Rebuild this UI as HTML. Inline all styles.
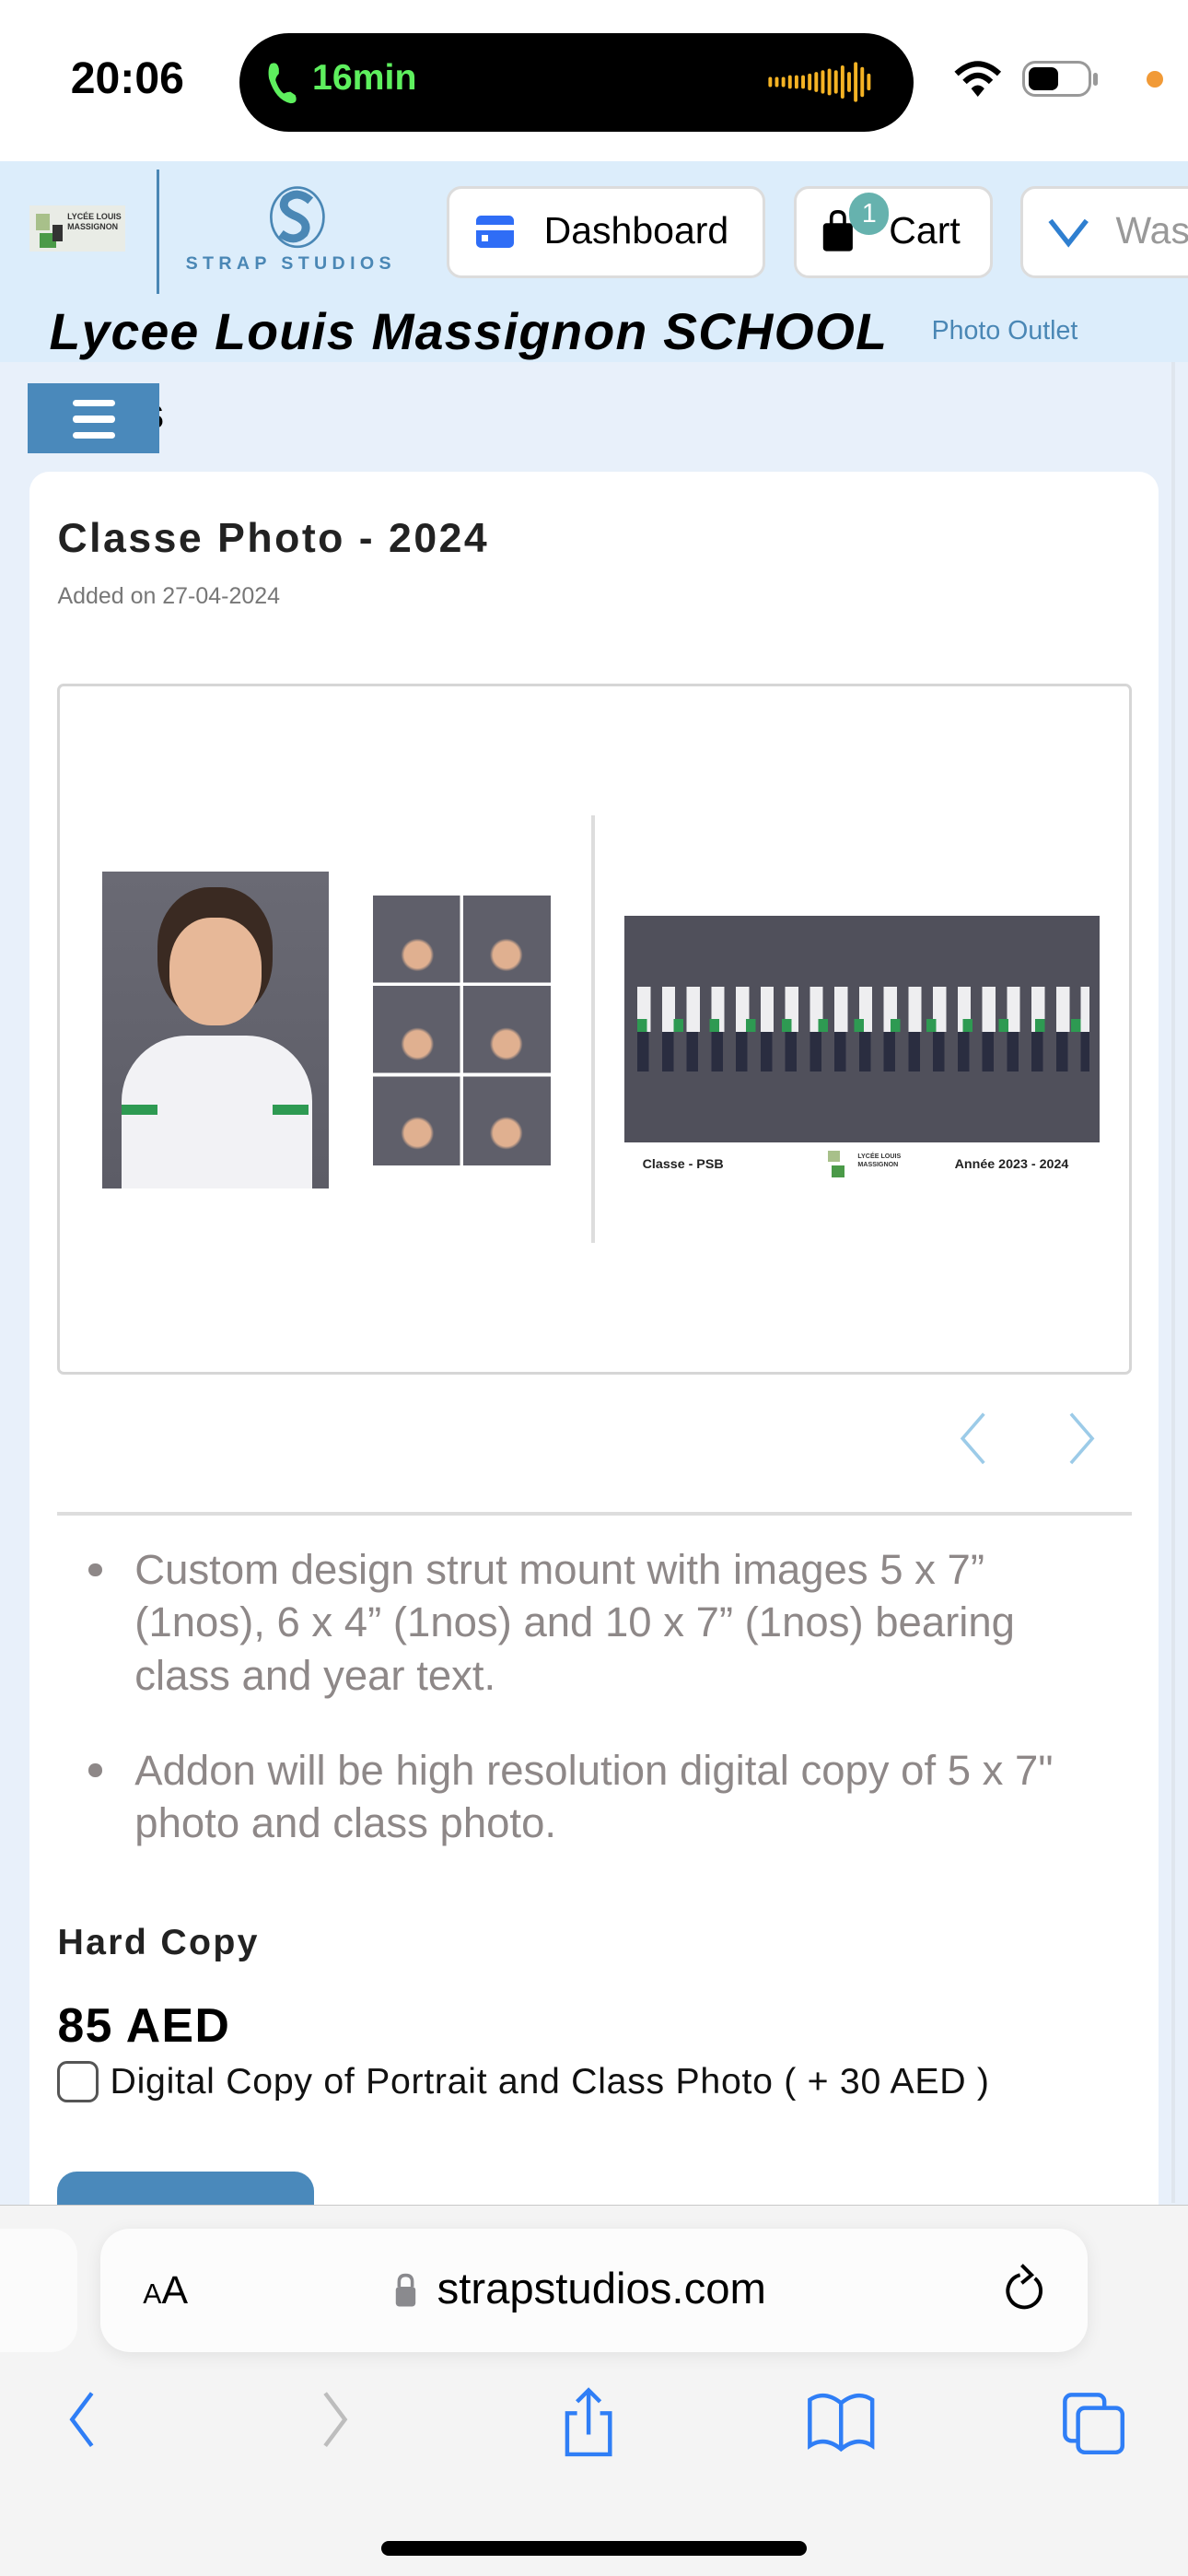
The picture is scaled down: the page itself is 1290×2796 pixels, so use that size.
<!DOCTYPE html>
<html><head><meta charset="utf-8">
<style>
html,body{margin:0;padding:0;}
body{width:1290px;height:2796px;overflow:hidden;background:#e8f0fa;font-family:"Liberation Sans",sans-serif;}
#w{zoom:1.78423;width:723px;height:1567px;position:relative;overflow:hidden;background:#e8f0fa;}
.a{position:absolute;}
.btn{position:absolute;background:#fff;border:2px solid #dcdcdc;border-radius:9px;box-sizing:border-box;}
</style></head><body><div id="w">
<div class="a" style="left:0;top:0;width:723px;height:98px;background:#fff"></div>
<div class="a" style="left:43px;top:32px;font-size:27px;font-weight:bold;color:#000">20:06</div>
<div class="a" style="left:146px;top:20px;width:410px;height:60px;background:#000;border-radius:30px"></div>
<svg class="a" style="left:160px;top:36px" width="24" height="28" viewBox="0 0 24 28"><path d="M5 3 Q9 1 10 6 L10 9 Q8 11 8 13 Q10 19 13 21 Q15 20 17 20 L20 22 Q22 27 17 27 Q8 25 4 12 Q3 6 5 3Z" fill="#5ef05e"/></svg>
<div class="a" style="left:190px;top:35px;font-size:22px;color:#5ef05e;font-weight:bold">16min</div>
<svg class="a" style="left:466px;top:36px" width="68" height="28"><g stroke="#f5b324" stroke-width="2.2" stroke-linecap="round">
<line x1="3" y1="12" x2="3" y2="16"/><line x1="7" y1="12" x2="7" y2="16"/><line x1="11" y1="12" x2="11" y2="16"/><line x1="15" y1="11" x2="15" y2="17"/><line x1="19" y1="11" x2="19" y2="17"/><line x1="23" y1="11" x2="23" y2="17"/><line x1="27" y1="10" x2="27" y2="18"/><line x1="31" y1="9" x2="31" y2="19"/><line x1="35" y1="8" x2="35" y2="20"/><line x1="39" y1="7" x2="39" y2="21"/><line x1="43" y1="8" x2="43" y2="20"/><line x1="47" y1="5" x2="47" y2="23"/><line x1="51" y1="9" x2="51" y2="19"/><line x1="55" y1="3" x2="55" y2="25"/><line x1="59" y1="6" x2="59" y2="22"/><line x1="63" y1="10" x2="63" y2="18"/></g></svg>
<svg class="a" style="left:580px;top:36px" width="30" height="24" viewBox="0 0 30 24"><path d="M2 9 Q15 -3 28 9" stroke="#000" stroke-width="3.5" fill="none"/><path d="M7 14 Q15 6 23 14" stroke="#000" stroke-width="3.5" fill="none"/><path d="M11 18 L15 23 L19 18 Q15 14 11 18Z" fill="#000"/></svg>
<div class="a" style="left:622px;top:37px;width:42px;height:22px;border:2px solid #999;border-radius:8px;box-sizing:border-box"></div>
<div class="a" style="left:626px;top:41px;width:18px;height:14px;background:#000;border-radius:4px"></div>
<div class="a" style="left:665px;top:44px;width:3px;height:8px;background:#999;border-radius:2px"></div>
<div class="a" style="left:698px;top:43px;width:10px;height:10px;background:#f19a37;border-radius:50%"></div>
<div class="a" style="left:0;top:98px;width:723px;height:122px;background:#dcedfb"></div>
<div class="a" style="left:18px;top:125px;width:58px;height:28px;background:#e9ece6"></div>
<div class="a" style="left:22px;top:130px;width:8px;height:10px;background:#a8c08a"></div>
<div class="a" style="left:24px;top:142px;width:10px;height:9px;background:#4a9a48"></div>
<div class="a" style="left:32px;top:137px;width:6px;height:10px;background:#333"></div>
<div class="a" style="left:41px;top:129px;font-size:5px;line-height:6px;color:#333;font-weight:bold">LYCÉE LOUIS<br>MASSIGNON</div>
<div class="a" style="left:95px;top:103px;width:2px;height:76px;background:#4a87b5"></div>
<svg class="a" style="left:162px;top:112px" width="38" height="40" viewBox="0 0 38 40"><ellipse cx="19" cy="20" rx="16" ry="18" fill="none" stroke="#4a87b5" stroke-width="1.5"/><path d="M27 10 Q19 3 12 9 Q8 15 17 19 Q27 23 23 30 Q17 36 9 30" fill="none" stroke="#4a87b5" stroke-width="5"/></svg>
<div class="a" style="left:113px;top:154px;font-size:11px;letter-spacing:3px;color:#4a87b5;font-weight:bold">STRAP STUDIOS</div>
<div class="btn" style="left:272px;top:113px;width:194px;height:56px"></div>
<div class="a" style="left:290px;top:131px;width:23px;height:20px;background:#2f6df6;border-radius:3px"></div>
<div class="a" style="left:290px;top:137px;width:23px;height:3px;background:#fff"></div>
<div class="a" style="left:293px;top:143px;width:4px;height:4px;background:#fff"></div>
<div class="a" style="left:331px;top:127px;font-size:23px;color:#000">Dashboard</div>
<div class="btn" style="left:483px;top:113px;width:121px;height:56px"></div>
<svg class="a" style="left:500px;top:128px" width="20" height="26"><path d="M6 9 V5 Q6 1 10 1 Q14 1 14 5 V9" stroke="#000" stroke-width="2" fill="none"/><rect x="1" y="8" width="18" height="17" rx="2" fill="#000"/></svg>
<div class="a" style="left:517px;top:117px;width:24px;height:26px;background:#66b2ae;border-radius:12px;color:#fff;font-size:16px;text-align:center;line-height:26px">1</div>
<div class="a" style="left:541px;top:127px;font-size:23px;color:#000">Cart</div>
<div class="btn" style="left:621px;top:113px;width:120px;height:56px"></div>
<svg class="a" style="left:637px;top:131px" width="26" height="20"><path d="M2 3 L13 17 L24 3" stroke="#2f7fd0" stroke-width="3" fill="none"/></svg>
<div class="a" style="left:679px;top:127px;font-size:23px;color:#999">Was</div>
<div class="a" style="left:30px;top:184px;font-size:31px;font-weight:bold;font-style:italic;color:#000;letter-spacing:0.7px">Lycee Louis Massignon SCHOOL</div>
<div class="a" style="left:567px;top:192px;font-size:16px;color:#4a87b5">Photo Outlet</div>
<div class="a" style="left:713px;top:220px;width:2px;height:1120px;background:#dfe6ee"></div>
<div class="a" style="left:85px;top:236px;font-size:27px;font-weight:bold">s</div>
<div class="a" style="left:17px;top:233px;width:80px;height:43px;background:#4a89bb"></div>
<div class="a" style="left:44px;top:243px;width:26px;height:4px;background:#fff;border-radius:2px"></div>
<div class="a" style="left:44px;top:253px;width:26px;height:4px;background:#fff;border-radius:2px"></div>
<div class="a" style="left:44px;top:263px;width:26px;height:4px;background:#fff;border-radius:2px"></div>
<div class="a" style="left:18px;top:287px;width:687px;height:1100px;background:#fff;border-radius:12px"></div>
<div class="a" style="left:35px;top:314px;font-size:25px;font-weight:bold;color:#222;letter-spacing:1.4px">Classe Photo - 2024</div>
<div class="a" style="left:35px;top:355px;font-size:14px;color:#777">Added on 27-04-2024</div>
<div class="a" style="left:35px;top:416px;width:654px;height:420px;border:2px solid #d6d6d6;border-radius:4px;box-sizing:border-box"></div>
<div class="a" style="left:62px;top:530px;width:138px;height:193px;background:linear-gradient(#6a6a74,#5c5c66)"></div>
<div class="a" style="left:96px;top:540px;width:70px;height:80px;background:#3a2a22;border-radius:45%"></div>
<div class="a" style="left:103px;top:558px;width:56px;height:66px;background:#e7b898;border-radius:45%"></div>
<div class="a" style="left:74px;top:630px;width:116px;height:93px;background:#f2f2f5;border-radius:40px 40px 0 0"></div>
<div class="a" style="left:74px;top:672px;width:22px;height:6px;background:#2e9a52"></div>
<div class="a" style="left:166px;top:672px;width:22px;height:6px;background:#2e9a52"></div>
<div class="a" style="left:227px;top:545px;width:108px;height:164px;background:
linear-gradient(90deg,transparent 53px,#fff 53px,#fff 55px,transparent 55px),
linear-gradient(transparent 53px,#fff 53px,#fff 55px,transparent 55px,transparent 108px,#fff 108px,#fff 110px,transparent 110px),
radial-gradient(circle at 25% 22%,#e0b090 8px,transparent 10px),radial-gradient(circle at 75% 22%,#e0b090 8px,transparent 10px),
radial-gradient(circle at 25% 55%,#e0b090 8px,transparent 10px),radial-gradient(circle at 75% 55%,#e0b090 8px,transparent 10px),
radial-gradient(circle at 25% 88%,#e0b090 8px,transparent 10px),radial-gradient(circle at 75% 88%,#e0b090 8px,transparent 10px),#5f5f6a"></div>
<div class="a" style="left:360px;top:496px;width:2px;height:260px;background:#ddd"></div>
<div class="a" style="left:380px;top:557px;width:289px;height:138px;background:#50505b"></div>
<div class="a" style="left:388px;top:600px;width:275px;height:52px;background:repeating-linear-gradient(90deg,#eeeef0 0 8px,#50505b 8px 15px)"></div>
<div class="a" style="left:388px;top:620px;width:275px;height:8px;background:repeating-linear-gradient(90deg,#2e9a52 0 6px,transparent 6px 22px)"></div>
<div class="a" style="left:388px;top:628px;width:275px;height:24px;background:repeating-linear-gradient(90deg,#2a2d40 0 7px,#50505b 7px 15px)"></div>
<div class="a" style="left:391px;top:704px;font-size:8px;font-weight:bold;color:#222">Classe - PSB</div>
<div class="a" style="left:504px;top:700px;width:7px;height:7px;background:#a8c08a"></div>
<div class="a" style="left:506px;top:709px;width:8px;height:7px;background:#4a9a48"></div>
<div class="a" style="left:522px;top:701px;font-size:4px;line-height:5px;font-weight:bold;color:#333">LYCÉE LOUIS<br>MASSIGNON</div>
<div class="a" style="left:581px;top:704px;font-size:8px;font-weight:bold;color:#222">Année 2023 - 2024</div>
<svg class="a" style="left:582px;top:858px" width="86" height="34"><path d="M17 2 L4 17 L17 32" stroke="#9ccbe8" stroke-width="2" fill="none"/><path d="M70 2 L83 17 L70 32" stroke="#9ccbe8" stroke-width="2" fill="none"/></svg>
<div class="a" style="left:35px;top:920px;width:654px;height:2px;background:#ddd"></div>
<div class="a" style="left:82px;top:939px;width:590px;font-size:25.5px;line-height:32px;color:#8e8888">Custom design strut mount with images 5 x 7” (1nos), 6 x 4” (1nos) and 10 x 7” (1nos) bearing class and year text.</div>
<div class="a" style="left:82px;top:1061px;width:620px;font-size:25.5px;line-height:32px;color:#8e8888">Addon will be high resolution digital copy of 5 x 7" photo and class photo.</div>
<div class="a" style="left:54px;top:951px;width:8px;height:8px;background:#8e8888;border-radius:50%"></div>
<div class="a" style="left:54px;top:1073px;width:8px;height:8px;background:#8e8888;border-radius:50%"></div>
<div class="a" style="left:35px;top:1169px;font-size:22px;font-weight:bold;color:#222;letter-spacing:1.3px">Hard Copy</div>
<div class="a" style="left:35px;top:1215px;font-size:29px;font-weight:bold;color:#000;letter-spacing:0.8px">85 AED</div>
<div class="a" style="left:35px;top:1254px;width:25px;height:25px;border:2px solid #555;border-radius:6px;box-sizing:border-box"></div>
<div class="a" style="left:67px;top:1254px;font-size:22px;color:#111;letter-spacing:0.4px">Digital Copy of Portrait and Class Photo ( + 30 AED )</div>
<div class="a" style="left:35px;top:1321px;width:156px;height:50px;background:#4a89bb;border-radius:12px"></div>
<div class="a" style="left:0;top:1341px;width:723px;height:226px;background:#f4f4f4;border-top:1px solid #c8c8c8"></div>
<div class="a" style="left:-20px;top:1356px;width:67px;height:75px;background:#fbfbfb;border-radius:16px"></div>
<div class="a" style="left:61px;top:1356px;width:601px;height:75px;background:#fcfcfc;border-radius:18px;box-shadow:0 2px 10px rgba(0,0,0,0.08)"></div>
<div class="a" style="left:87px;top:1380px;color:#000"><span style="font-size:17px">A</span><span style="font-size:24px">A</span></div>
<svg class="a" style="left:240px;top:1382px" width="14" height="22"><path d="M3 9 V6 Q3 2 7 2 Q11 2 11 6 V9" stroke="#8a8a8e" stroke-width="2" fill="none"/><rect x="1" y="9" width="12" height="12" rx="2" fill="#8a8a8e"/></svg>
<div class="a" style="left:266px;top:1377px;font-size:26.5px;color:#000">strapstudios.com</div>
<svg class="a" style="left:610px;top:1376px" width="30" height="34"><path d="M20 10 A10 10 0 1 1 11 8" stroke="#000" stroke-width="2.2" fill="none"/><path d="M12 2 L18 8 L12 13" stroke="#000" stroke-width="2.2" fill="none"/></svg>
<svg class="a" style="left:36px;top:1454px" width="24" height="36"><path d="M20 2 L8 18 L20 34" stroke="#2f7ef6" stroke-width="2.5" fill="none"/></svg>
<svg class="a" style="left:194px;top:1454px" width="24" height="36"><path d="M4 2 L16 18 L4 34" stroke="#bdbdbd" stroke-width="2.5" fill="none"/></svg>
<svg class="a" style="left:340px;top:1451px" width="36" height="44"><path d="M11 17 H5 V42 H31 V17 H25" stroke="#2f7ef6" stroke-width="2.5" fill="none"/><path d="M18 30 V3 M11 10 L18 3 L25 10" stroke="#2f7ef6" stroke-width="2.5" fill="none"/></svg>
<svg class="a" style="left:490px;top:1454px" width="44" height="38"><path d="M22 8 Q12 0 3 6 V34 Q12 28 22 36 Q32 28 41 34 V6 Q32 0 22 8 Z M22 8 V36" stroke="#2f7ef6" stroke-width="2.5" fill="none"/></svg>
<svg class="a" style="left:645px;top:1454px" width="42" height="40"><rect x="3" y="3" width="24" height="28" rx="4" stroke="#2f7ef6" stroke-width="2.5" fill="none"/><rect x="11" y="11" width="27" height="27" rx="4" stroke="#2f7ef6" stroke-width="2.5" fill="#f4f4f4"/></svg>
<div class="a" style="left:232px;top:1546px;width:259px;height:9px;background:#000;border-radius:5px"></div>
</div></body></html>
